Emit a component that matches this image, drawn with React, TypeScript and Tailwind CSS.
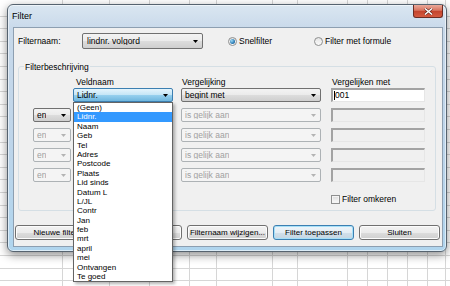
import React from "react";

const gridColumns = [
  "w-[63px]",
  "w-[47px]",
  "w-[40px]",
  "w-[40px]",
  "w-[27px]",
  "w-[56px]",
  "w-[25px]",
  "w-[50px]",
  "w-[20px]",
  "w-[20px]",
  "w-[20px]",
  "w-[20px]",
  "w-[18px]",
];

const fieldNames = [
  "(Geen)",
  "Lidnr.",
  "Naam",
  "Geb",
  "Tel",
  "Adres",
  "Postcode",
  "Plaats",
  "Lid sinds",
  "Datum L",
  "L/JL",
  "Contr",
  "Jan",
  "feb",
  "mrt",
  "april",
  "mei",
  "Ontvangen",
  "Te goed",
];

type ComboVariant = "normal" | "open" | "disabled";

const comboStyles: Record<ComboVariant, string> = {
  normal:
    "border-[#707070] bg-[linear-gradient(#f3f3f3,#ebebeb_50%,#dddddd_50%,#cfcfcf)] text-black",
  open: "border-[#3c7fb1] bg-[linear-gradient(#e5f4fc,#c4e5f6_50%,#98d1ef_50%,#6fb6de)] text-black",
  disabled: "border-[#adb2b5] bg-[#f4f4f4] text-[#a0a0a0]",
};

function Arrow({ disabled }: { disabled?: boolean }) {
  return (
    <svg width="5" height="3" viewBox="0 0 5 3" className="shrink-0">
      <polygon points="0,0 5,0 2.5,3" fill={disabled ? "#b4b4b4" : "#000"} />
    </svg>
  );
}

function Combo({
  width,
  label,
  variant = "normal",
  tall,
}: {
  width: string;
  label: string;
  variant?: ComboVariant;
  tall?: boolean;
}) {
  return (
    <div
      className={`${width} ${tall ? "h-[16px] pl-[4px]" : "h-[14px] pl-[3px]"} shrink-0 flex items-center justify-between border rounded-[2px] pr-[4px] ${comboStyles[variant]}`}
    >
      <span className="leading-none truncate">{label}</span>
      <Arrow disabled={variant === "disabled"} />
    </div>
  );
}

function TextBox({ value, disabled }: { value?: string; disabled?: boolean }) {
  return (
    <div
      className={`w-[94px] h-[14px] shrink-0 flex items-center border-t-2 border-l-2 border-t-[#a3a3a3] border-l-[#a3a3a3] border-r border-b border-r-[#e6e6e6] border-b-[#e6e6e6] pl-[1px] ${
        disabled ? "bg-[#f0f0f0]" : "bg-white"
      }`}
    >
      {value && (
        <>
          <span className="w-px h-[9px] bg-black" />
          <span className="leading-none">{value}</span>
        </>
      )}
    </div>
  );
}

function Radio({ checked, label }: { checked?: boolean; label: string }) {
  return (
    <div className="flex items-center gap-[2px]">
      <div className="w-[9px] h-[9px] rounded-full border border-[#8e8f8f] bg-[linear-gradient(#e4e4e4,#fbfbfb)] flex items-center justify-center">
        {checked && (
          <div className="w-[5px] h-[5px] rounded-full bg-[radial-gradient(circle_at_35%_35%,#9fdcf8,#2a7bb5_60%,#1a4f7e)]" />
        )}
      </div>
      <span className="leading-none">{label}</span>
    </div>
  );
}

function Button({ label, primary }: { label: string; primary?: boolean }) {
  return (
    <div
      className={`w-[81px] h-[15px] shrink-0 flex items-center justify-center border rounded-[3px] text-[8px] leading-none ${
        primary
          ? "border-[#3c7fb1] bg-[linear-gradient(#eef5fa,#e3edf4_50%,#d2e0ea_50%,#c4d6e3)] shadow-[inset_0_0_0_1px_#a6e0f8]"
          : "border-[#707070] bg-[linear-gradient(#f3f3f3,#ebebeb_50%,#dddddd_50%,#cfcfcf)] shadow-[inset_0_0_0_1px_#fcfcfc]"
      }`}
    >
      {label}
    </div>
  );
}

function FieldList() {
  return (
    <div className="absolute top-full left-0 z-10 w-[100px] bg-white border border-[#646464] shadow-[2px_2px_3px_rgba(0,0,0,0.3)] text-[8px]">
      {fieldNames.map((name) => (
        <div
          key={name}
          className={`h-[9.4px] leading-[9.4px] pl-[3px] ${
            name === "Lidnr." ? "bg-[#3399ff] text-white" : "text-black"
          }`}
        >
          {name}
        </div>
      ))}
    </div>
  );
}

export default function App() {
  const rows = [0, 1, 2, 3, 4];

  return (
    <div className="relative w-[450px] h-[286px] overflow-hidden bg-white font-['Liberation_Sans',Arial,sans-serif] text-[8.5px] text-black select-none">
      {/* spreadsheet behind the dialog */}
      <div className="flex h-full bg-[repeating-linear-gradient(to_bottom,transparent_0px,transparent_11.6px,#d6d6d6_11.6px,#d6d6d6_12.6px)] bg-[position:0_4px]">
        {gridColumns.map((w, i) => (
          <div key={i} className={`${w} h-full shrink-0 border-r border-[#d6d6d6]`} />
        ))}
      </div>

      {/* dialog window */}
      <div className="absolute left-[7px] top-[4px] w-[440px] h-[248px] flex flex-col rounded-[6px] border border-[#56636f] bg-[linear-gradient(to_bottom,#dae6f1,#c8d9ea_10%,#bed5ea_55%,#b0d5ee)] shadow-[0_3px_10px_rgba(0,0,0,0.45),inset_0_0_0_1px_rgba(255,255,255,0.55)]">
        <div className="h-[22px] flex items-start justify-between shrink-0">
          <span className="pl-[4px] pt-[6px] text-[9px] leading-[10px]">Filter</span>
          <div className="mr-[3px] w-[30px] h-[13px] flex items-center justify-center rounded-b-[3px] border border-t-0 border-[#6b2b22] bg-[linear-gradient(#eaaa9b,#d8735e_45%,#c3432c_50%,#d55a40)]">
            <svg width="9" height="7" viewBox="0 0 9 7">
              <path d="M1 0.5 L8 6.5 M8 0.5 L1 6.5" stroke="#5a231c" strokeWidth="2.6" />
              <path d="M1 0.5 L8 6.5 M8 0.5 L1 6.5" stroke="#fff" strokeWidth="1.5" />
            </svg>
          </div>
        </div>

        <div className="ml-[5px] mr-[3px] mb-[4px] flex-1 flex flex-col bg-[#f0f0f0] border border-[#8d9fb1]">
          {/* filter name row */}
          <div className="mt-[5px] h-[16px] flex items-center pl-[4px]">
            <span className="w-[64px] leading-none">Filternaam:</span>
            <Combo width="w-[121px]" label="lindnr. volgord" tall />
            <div className="ml-[25px] w-[86px]">
              <Radio checked label="Snelfilter" />
            </div>
            <Radio label="Filter met formule" />
          </div>

          {/* group box */}
          <div className="relative mt-[17px] ml-[4px] w-[418px] h-[145px] border border-[#d5dfe5] rounded-[3px] pt-[10px] flex flex-col">
            <span className="absolute -top-[5px] left-[5px] px-[1px] leading-[10px] bg-[#f0f0f0]">
              Filterbeschrijving
            </span>

            <div className="h-[10px] mb-[1px] flex items-center leading-none pl-[14px]">
              <span className="ml-[43px] w-[106px]">Veldnaam</span>
              <span className="w-[150px]">Vergelijking</span>
              <span>Vergelijken met</span>
            </div>

            <div className="flex flex-col gap-[6px] pl-[14px]">
              {rows.map((i) => (
                <div key={i} className="flex items-center h-[14px]">
                  {i === 0 ? (
                    <div className="w-[38px] shrink-0" />
                  ) : (
                    <Combo width="w-[38px]" label="en" variant={i === 1 ? "normal" : "disabled"} />
                  )}
                  <div className="relative ml-[2px]">
                    <Combo
                      width="w-[100px]"
                      label={i === 0 ? "Lidnr." : ""}
                      variant={i === 0 ? "open" : "disabled"}
                    />
                    {i === 0 && <FieldList />}
                  </div>
                  <div className="ml-[8px]">
                    <Combo
                      width="w-[140px]"
                      label={i === 0 ? "begint met" : "is gelijk aan"}
                      variant={i === 0 ? "normal" : "disabled"}
                    />
                  </div>
                  <div className="ml-[10px]">
                    {i === 0 ? <TextBox value="001" /> : <TextBox disabled />}
                  </div>
                </div>
              ))}
            </div>

            <div className="mt-[13px] ml-[312px] flex items-center gap-[2px]">
              <div className="w-[9px] h-[9px] border border-[#8e8f8f] bg-[linear-gradient(#dcdcdc,#fafafa)] shadow-[inset_0_0_0_1px_#f4f4f4]" />
              <span className="leading-none">Filter omkeren</span>
            </div>
          </div>

          {/* buttons */}
          <div className="mt-[14px] pl-[1px] flex gap-[5px]">
            <Button label="Nieuwe filter" />
            <Button label="Filter verwijderen" />
            <Button label="Filternaam wijzigen..." />
            <Button label="Filter toepassen" primary />
            <Button label="Sluiten" />
          </div>
        </div>
      </div>
    </div>
  );
}
